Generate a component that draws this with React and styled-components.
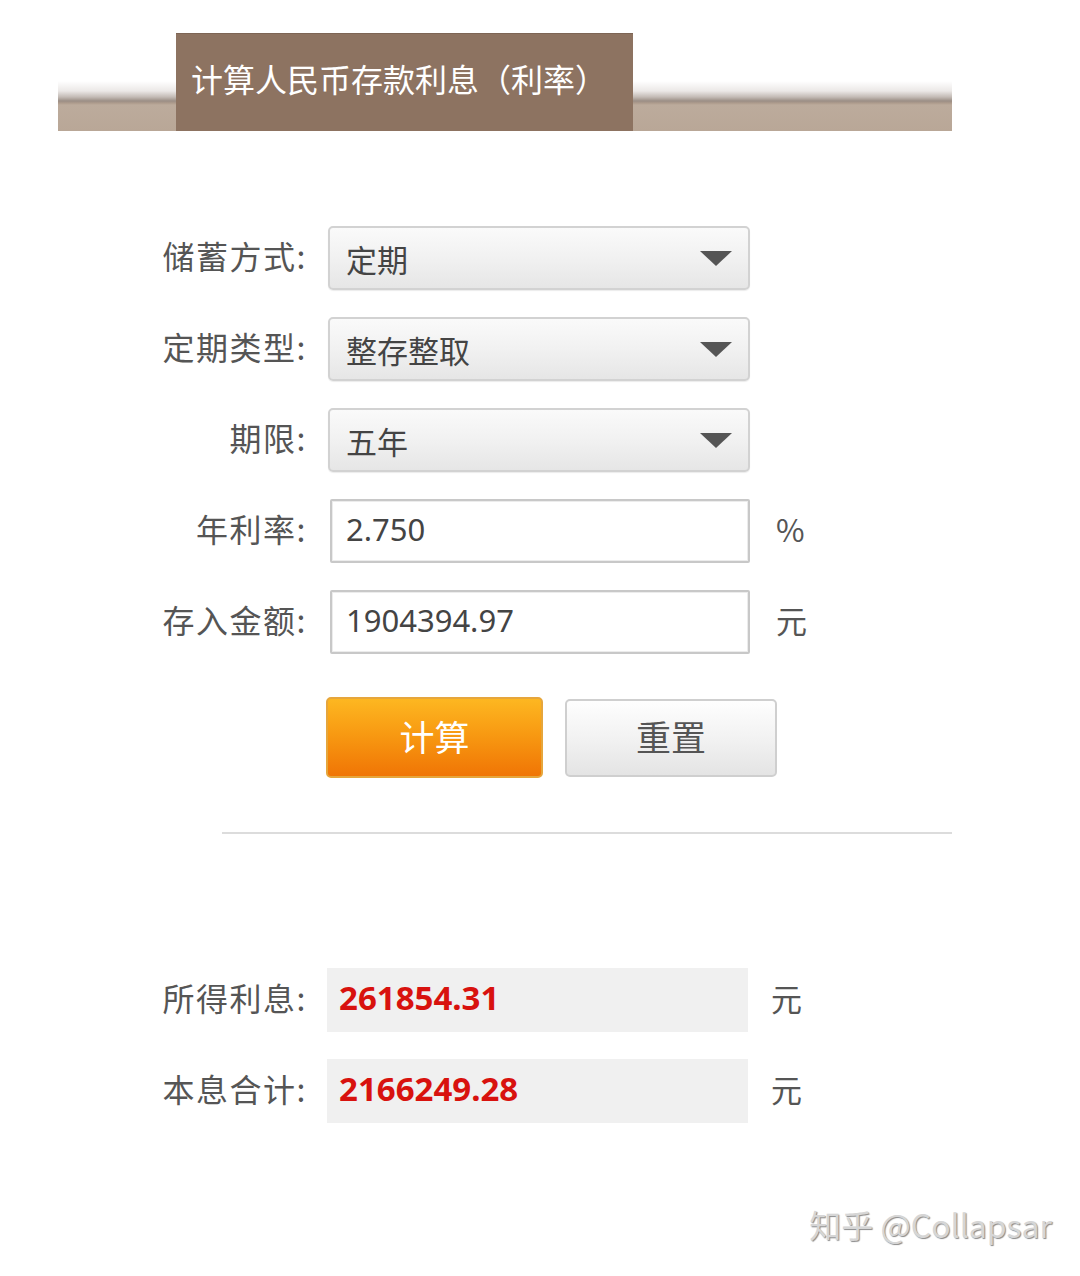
import React from 'react'
import { styled, createGlobalStyle } from 'styled-components'

const GlobalStyle = createGlobalStyle`
  html, body {
    margin: 0;
    padding: 0;
    background: #fff;
  }
  body {
    font-family: "Noto Sans", "Noto Sans CJK SC", sans-serif;
  }
`

const selects = [
  { label: '储蓄方式:', value: '定期' },
  { label: '定期类型:', value: '整存整取' },
  { label: '期限:', value: '五年' },
]

const inputs = [
  { label: '年利率:', value: '2.750', unit: '%' },
  { label: '存入金额:', value: '1904394.97', unit: '元' },
]

const results = [
  { label: '所得利息:', value: '261854.31' },
  { label: '本息合计:', value: '2166249.28' },
]

const App = () => {
  return (
    <Page>
      <GlobalStyle />
      <Header>
        <Tab>计算人民币存款利息（利率）</Tab>
      </Header>

      <Form>
        {selects.map((s) => (
          <Row key={s.label}>
            <Label>{s.label}</Label>
            <Select>
              <span>{s.value}</span>
              <Arrow />
            </Select>
          </Row>
        ))}
        {inputs.map((i) => (
          <Row key={i.label}>
            <Label>{i.label}</Label>
            <Input>{i.value}</Input>
            <Unit>{i.unit}</Unit>
          </Row>
        ))}
      </Form>

      <Buttons>
        <Button $primary>计算</Button>
        <Button>重置</Button>
      </Buttons>

      <Divider />

      <Form $results>
        {results.map((r) => (
          <Row key={r.label} $results>
            <Label>{r.label}</Label>
            <Result>{r.value}</Result>
            <Unit>元</Unit>
          </Row>
        ))}
      </Form>

      <Watermark>知乎 @Collapsar</Watermark>
    </Page>
  )
}

const Page = styled.div`
  width: 1080px;
  height: 1276px;
  overflow: hidden;
  padding-top: 33px;
  box-sizing: border-box;
  display: flex;
  flex-direction: column;
`

const Header = styled.div`
  margin-left: 58px;
  width: 894px;
  height: 98px;
  display: flex;
  background: linear-gradient(
    to bottom,
    #fff 0,
    #fff 48px,
    #ebe8e6 58px,
    #c3bbb5 64px,
    #9b8e85 68px,
    #ad9b8c 70px,
    #bcab9c 72px,
    #b9a797 98px
  );
`

const Tab = styled.div`
  margin-left: 118px;
  width: 457px;
  height: 98px;
  box-sizing: border-box;
  padding-left: 15px;
  padding-bottom: 10px;
  display: flex;
  align-items: center;
  background: #8d7361;
  border-top: 1px solid #7d6555;
  color: #fff;
  font-size: 32px;
  font-family: "Noto Sans CJK SC", sans-serif;
`

const Form = styled.div`
  margin-top: ${(p) => (p.$results ? '134px' : '95px')};
  display: flex;
  flex-direction: column;
  gap: 27px;
`

const Row = styled.div`
  display: grid;
  grid-template-columns: 190px ${(p) => (p.$results ? '421px 23px' : '423px 26px')} auto;
  align-items: center;
  height: 64px;
  padding-left: 137px;
`

const Label = styled.div`
  grid-column: 1;
  text-align: right;
  white-space: nowrap;
  padding-right: 20px;
  padding-bottom: 6px;
  color: #555;
  font-size: 32px;
  letter-spacing: 1.5px;
  font-family: "Noto Sans CJK SC", sans-serif;
`

const Select = styled.div`
  grid-column: 2;
  margin-left: 1px;
  height: 64px;
  box-sizing: border-box;
  display: flex;
  align-items: center;
  justify-content: space-between;
  padding: 0 16px 0 16px;
  border: 2px solid #d2d2d2;
  border-radius: 5px;
  background: linear-gradient(to bottom, #fafafa 0%, #f1f1f1 50%, #e6e6e6 100%);
  box-shadow: 0 1px 1px rgba(0, 0, 0, 0.08);
  color: #444;
  font-size: 31px;
  font-family: "Noto Sans CJK SC", sans-serif;
`

const Arrow = styled.div`
  width: 0;
  height: 0;
  border-left: 16px solid transparent;
  border-right: 16px solid transparent;
  border-top: 15px solid #555;
`

const Input = styled.div`
  grid-column: 2;
  margin-left: 3px;
  height: 64px;
  box-sizing: border-box;
  display: flex;
  align-items: center;
  padding-left: 14px;
  padding-bottom: 4px;
  border: 2px solid #c8c8c8;
  border-radius: 2px;
  box-shadow: inset 0 0 0 1px #ececec;
  background: #fff;
  color: #444;
  font-size: 31px;
`

const Unit = styled.div`
  grid-column: 4;
  padding-bottom: 6px;
  color: #555;
  font-size: 31px;
  font-family: "Noto Sans CJK SC", sans-serif;
`

const Buttons = styled.div`
  margin-top: 43px;
  margin-left: 326px;
  display: flex;
  gap: 22px;
  align-items: center;
`

const Button = styled.div`
  width: ${(p) => (p.$primary ? '217px' : '212px')};
  height: ${(p) => (p.$primary ? '81px' : '78px')};
  box-sizing: border-box;
  display: flex;
  align-items: center;
  justify-content: center;
  border-radius: 5px;
  border: 2px solid ${(p) => (p.$primary ? '#e6a63c' : '#cfcfcf')};
  background: ${(p) =>
    p.$primary
      ? 'linear-gradient(to bottom, #fdb721 0%, #f89a12 45%, #f07505 100%)'
      : 'linear-gradient(to bottom, #fefefe 0%, #f2f2f2 50%, #e4e4e4 100%)'};
  color: ${(p) => (p.$primary ? '#fff' : '#555')};
  font-size: 35px;
  font-family: "Noto Sans CJK SC", sans-serif;
  padding-bottom: 5px;
`

const Divider = styled.div`
  margin-top: 54px;
  margin-left: 222px;
  width: 730px;
  height: 2px;
  background: #dcdcdc;
`

const Result = styled.div`
  grid-column: 2;
  height: 64px;
  box-sizing: border-box;
  display: flex;
  align-items: center;
  padding-left: 12px;
  padding-bottom: 6px;
  background: #f0f0f0;
  color: #d8120e;
  font-size: 33px;
  font-weight: 700;
`

const Watermark = styled.div`
  margin-top: 78px;
  align-self: flex-end;
  margin-right: 28px;
  color: #d6d6d6;
  font-size: 32px;
  font-family: "Noto Sans CJK SC", sans-serif;
  text-shadow: 1px 1px 1px #8a8a8a;
`

export default App
